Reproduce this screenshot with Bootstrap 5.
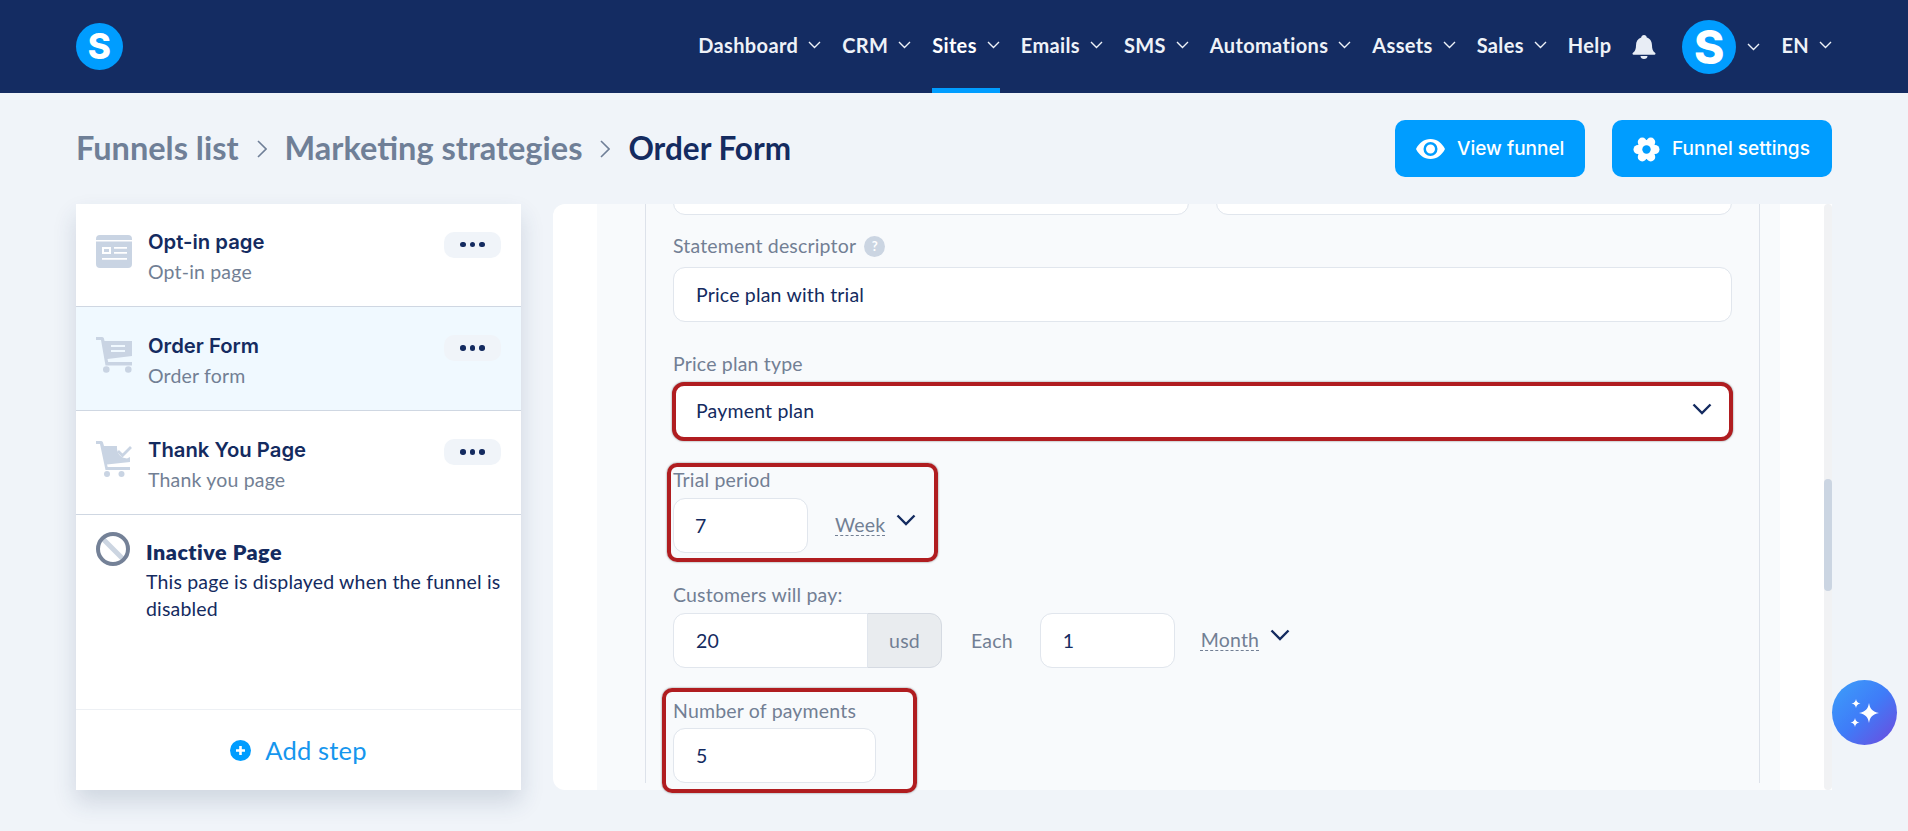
<!DOCTYPE html>
<html lang="en">
<head>
    <meta charset="UTF-8">
    <meta name="viewport" content="width=device-width, initial-scale=1.0">
    <title>Order Form</title>
    <link href="https://cdn.jsdelivr.net/npm/bootstrap@5.3.0/dist/css/bootstrap.min.css" rel="stylesheet">
    <script src="https://cdn.jsdelivr.net/npm/bootstrap@5.3.0/dist/js/bootstrap.bundle.min.js"></script>
    <style>
        body {
            background-color: #f0f4f9;
            color: #142b60;
            font-family: "Lato", "Liberation Sans", sans-serif;
            font-size: 19.5px;
            letter-spacing: .18px;
            height: 831px;
            overflow: hidden;
        }
        .top-bar {
            height: 93px;
            background-color: #142c62;
            padding: 0 76px;
        }
        .brand-dot {
            background-color: #009dff;
            color: #fff;
            font-family: "Inter", sans-serif;
            font-weight: 800;
            width: 47px;
            height: 47px;
            font-size: 35px;
            line-height: 1;
        }
        .brand-dot.big {
            width: 54px;
            height: 54px;
            font-size: 46px;
            margin-left: 26px;
        }
        .top-link {
            height: 93px;
            color: #eef2f8;
            font-weight: 700;
            font-size: 20px;
            letter-spacing: .35px;
            text-decoration: none;
            margin-left: 21px;
            border-bottom: 5px solid transparent;
            padding-top: 1px;
        }
        .top-link svg { margin-left: 10px; }
        .top-link.current { color: #fff; border-bottom-color: #009dff; }
        .bell-ico { margin-left: 21px; }
        .avatar-caret { margin-left: 11px; }
        .page-head {
            height: 111px;
            padding: 0 76px;
        }
        .crumb-part {
            font-size: 32.5px;
            font-weight: 700;
            letter-spacing: 0;
            color: #6f7f97;
            text-decoration: none;
        }
        .crumb-part.here { color: #142b60; font-size: 31.5px; }
        .crumb-sep { margin: 0 18px; }
        .head-btn {
            background-color: #009dff;
            border: 0;
            color: #fff;
            height: 57px;
            border-radius: 10px;
            font-family: "Inter", sans-serif;
            font-size: 19px;
            font-weight: 500;
            letter-spacing: 0;
            display: flex;
            align-items: center;
            gap: 12px;
        }
        .head-btn:hover { background-color: #009dff; color: #fff; }
        .btn-view { width: 190px; padding: 1px 0 0 21px; }
        .btn-settings { width: 220px; padding: 1px 0 0 21px; margin-left: 27px; }
        .work-area {
            padding: 0 76px;
            gap: 32px;
        }
        .steps-col {
            width: 445px;
            height: 586px;
            background-color: #fff;
            box-shadow: 0 12px 22px rgba(40, 60, 100, .16);
        }
        .list-group-flush > .step-row,
        .list-group-flush > .step-row:last-child {
            height: 104px;
            padding: 0 20px;
            border: 0;
            border-bottom: 1px solid #cfd7e2;
            border-radius: 0;
            background-color: #fff;
        }
        .list-group-flush > .step-row:first-child { height: 103px; }
        .list-group-flush > .step-row.active-step { background-color: #f0f9ff; }
        .step-ico { width: 36px; flex-shrink: 0; margin-right: 17px; margin-top: -8px; }
        .step-body { flex: 1; margin-left: -1px; padding-top: 4px; }
        .step-name {
            font-family: "Inter", sans-serif;
            font-size: 20.3px;
            font-weight: 600;
            letter-spacing: 0;
            line-height: 26px;
            color: #142b60;
        }
        .step-sub {
            line-height: 26px;
            margin-top: 4px;
            color: #727f94;
        }
        .dots-btn {
            width: 57px;
            height: 26px;
            background-color: #f0f4f9;
            border-radius: 10px;
            gap: 4px;
            margin-top: -21px;
        }
        .dots-btn span {
            width: 5.500px;
            height: 5.500px;
            border-radius: 50%;
            background-color: #142b60;
        }
        .inactive-row { padding: 17px 20px 0; }
        .no-ico { margin-right: 16px; flex-shrink: 0; }
        .inactive-title { font-size: 21.5px; font-weight: 800; letter-spacing: .5px; line-height: 26px; margin-top: 7px; }
        .inactive-text { line-height: 27px; margin-top: 3px; }
        .add-row {
            height: 81px;
            border-top: 1px solid #edf0f4;
            color: #1596ee;
            font-size: 25.5px;
            text-decoration: none;
            gap: 14px;
        }
        .form-panel {
            flex: 1;
            height: 586px;
            background-color: #fff;
            border-radius: 12px 0 0 12px;
        }
        .panel-light {
            margin-left: 44px;
            width: 1183px;
            padding: 0 21px 0 48px;
            background-color: #f8fafc;
        }
        .form-box {
            border-left: 1px solid #dde2ea;
            border-right: 1px solid #dde2ea;
            padding: 0 27px;
            width: 1115px;
        }
        .cut-row {
            height: 11px;
            overflow: hidden;
            align-items: flex-end;
            gap: 27px;
        }
        .cut-row .form-control { flex: 1; }
        .fld-label {
            display: block;
            line-height: 25px;
            color: #727f94;
            margin-bottom: 6px;
        }
        .form-control, .form-select, .input-group-text {
            height: 55px;
            font-size: 19.5px;
            letter-spacing: .18px;
            color: #142b60;
            border: 1px solid #e1e6ed;
            border-radius: 12px;
            padding-left: 22px;
            box-shadow: none;
        }
        .fld { margin-top: 29px; position: relative; }
        .fld-first { margin-top: 18px; }
        .fld-first .fld-label { margin-bottom: 9px; }
        .fld-trial { margin-top: 26px; }
        .fld-count { margin-top: 30px; }
        .fld-count .fld-label { margin-bottom: 5px; }
        .help-mark {
            display: inline-block;
            width: 21px;
            height: 21px;
            border-radius: 50%;
            background-color: #cbd5e2;
            color: #fff;
            font-size: 13px;
            font-weight: 700;
            line-height: 21px;
            text-align: center;
            margin-left: 8px;
            vertical-align: 2px;
        }
        .form-select.plan-select {
            height: 59px;
            border: 4px solid #b01d20;
            border-radius: 12px;
            box-shadow: 0 0 2px rgba(60, 60, 60, .7);
            padding: 0 0 2px 20px;
            margin-left: -1px;
            width: calc(100% + 2px);
            background-image: none;
        }
        .plan-caret { position: absolute; right: 20px; top: 21px; }
        .input-group-text {
            background-color: #e9ecef;
            color: #727f94;
            width: 75px;
            padding: 0;
            justify-content: center;
            border-color: #d5dae2;
        }
        .num-short { width: 135px; padding-left: 21px; }
        .num-count { width: 203px; }
        .pay-group { width: 269px; }
        .pay-each { width: 135px; }
        .each-word { color: #727f94; margin: 0 27px 0 29px; }
        .dotted-unit {
            color: #727f94;
            margin-left: 27px;
            padding-bottom: 2px;
            text-decoration: underline dashed;
            text-underline-offset: 3px;
            text-decoration-thickness: 1px;
        }
        .pay-each + .dotted-unit { margin-left: 26px; }
        .unit-caret { margin-left: 11px; margin-top: -10px; }
        .red-frame {
            position: absolute;
            border: 4px solid #b01d20;
            border-radius: 10px;
            box-shadow: 0 0 2px rgba(60, 60, 60, .7);
            pointer-events: none;
        }
        .frame-trial { left: -6px; top: -4px; width: 271px; height: 99px; }
        .frame-count { left: -11px; top: -10px; width: 255px; height: 105px; }
        .scroll-track {
            width: 8px;
            height: 586px;
            margin-left: auto;
            background-color: #f1f2f4;
            border-radius: 4px;
        }
        .scroll-thumb {
            height: 112px;
            margin-top: 275px;
            background-color: #cbd5e2;
            border-radius: 4px;
        }
        .spark-btn {
            position: absolute;
            left: 1832px;
            top: 680px;
            width: 65px;
            height: 65px;
            background: linear-gradient(135deg, #3ca0fa 0%, #3f7cf8 50%, #6f49dc 100%);
        }
    </style>
</head>
<body>
    <nav class="top-bar d-flex align-items-center">
        <a href="#" class="brand-dot rounded-circle d-flex align-items-center justify-content-center text-decoration-none">S</a>
        <div class="ms-auto d-flex align-items-center">
            <a href="#" class="top-link d-flex align-items-center">Dashboard<svg width="13" height="8" viewBox="0 0 13 8"><path d="M1 1l5.500 5.500L12 1" fill="none" stroke="#eef2f8" stroke-width="1.400"/></svg></a>
            <a href="#" class="top-link d-flex align-items-center">CRM<svg width="13" height="8" viewBox="0 0 13 8"><path d="M1 1l5.500 5.500L12 1" fill="none" stroke="#eef2f8" stroke-width="1.400"/></svg></a>
            <a href="#" class="top-link current d-flex align-items-center">Sites<svg width="13" height="8" viewBox="0 0 13 8"><path d="M1 1l5.500 5.500L12 1" fill="none" stroke="#eef2f8" stroke-width="1.400"/></svg></a>
            <a href="#" class="top-link d-flex align-items-center">Emails<svg width="13" height="8" viewBox="0 0 13 8"><path d="M1 1l5.500 5.500L12 1" fill="none" stroke="#eef2f8" stroke-width="1.400"/></svg></a>
            <a href="#" class="top-link d-flex align-items-center">SMS<svg width="13" height="8" viewBox="0 0 13 8"><path d="M1 1l5.500 5.500L12 1" fill="none" stroke="#eef2f8" stroke-width="1.400"/></svg></a>
            <a href="#" class="top-link d-flex align-items-center">Automations<svg width="13" height="8" viewBox="0 0 13 8"><path d="M1 1l5.500 5.500L12 1" fill="none" stroke="#eef2f8" stroke-width="1.400"/></svg></a>
            <a href="#" class="top-link d-flex align-items-center">Assets<svg width="13" height="8" viewBox="0 0 13 8"><path d="M1 1l5.500 5.500L12 1" fill="none" stroke="#eef2f8" stroke-width="1.400"/></svg></a>
            <a href="#" class="top-link d-flex align-items-center">Sales<svg width="13" height="8" viewBox="0 0 13 8"><path d="M1 1l5.500 5.500L12 1" fill="none" stroke="#eef2f8" stroke-width="1.400"/></svg></a>
            <a href="#" class="top-link d-flex align-items-center">Help</a>
            <svg class="bell-ico" width="24" height="24" viewBox="0 0 24 24"><path d="M12 0c1.600 0 2.600 1 2.800 2.400C18.400 3.600 20 6.600 20 10.500c0 3.400.8 5.600 3 7.300.9.7.5 1.900-.6 1.900H1.600c-1.100 0-1.500-1.200-.6-1.900 2.200-1.700 3-3.900 3-7.300 0-3.900 1.600-6.900 5.200-8.100C9.400 1 10.400 0 12 0zM8.500 21h7c0 1.800-1.500 3-3.500 3s-3.500-1.200-3.500-3z" fill="#e8edf5"/></svg>
            <a href="#" class="brand-dot big rounded-circle d-flex align-items-center justify-content-center text-decoration-none">S</a>
            <svg class="avatar-caret" width="13" height="8" viewBox="0 0 13 8"><path d="M1 1l5.500 5.500L12 1" fill="none" stroke="#eef2f8" stroke-width="1.400"/></svg>
            <a href="#" class="top-link d-flex align-items-center">EN<svg width="13" height="8" viewBox="0 0 13 8"><path d="M1 1l5.500 5.500L12 1" fill="none" stroke="#eef2f8" stroke-width="1.400"/></svg></a>
        </div>
    </nav>

    <div class="page-head d-flex align-items-center">
        <a href="#" class="crumb-part">Funnels list</a>
        <svg class="crumb-sep" width="10" height="18" viewBox="0 0 10 18"><path d="M1 1l8 8-8 8" fill="none" stroke="#6f7f97" stroke-width="1.600"/></svg>
        <a href="#" class="crumb-part">Marketing strategies</a>
        <svg class="crumb-sep" width="10" height="18" viewBox="0 0 10 18"><path d="M1 1l8 8-8 8" fill="none" stroke="#6f7f97" stroke-width="1.600"/></svg>
        <span class="crumb-part here">Order Form</span>
        <button class="btn head-btn btn-view ms-auto">
            <svg width="29" height="20" viewBox="0 0 29 20"><path fill-rule="evenodd" d="M14.500 0C21 0 26 4 29 10c-3 6-8 10-14.500 10S3 16 0 10C3 4 8 0 14.500 0zm0 3a7 7 0 1 0 0 14 7 7 0 0 0 0-14zm0 2.500a4.500 4.500 0 1 1 0 9 4.500 4.500 0 0 1 0-9z" fill="#fff"/></svg>
            View funnel
        </button>
        <button class="btn head-btn btn-settings">
            <svg width="27" height="27" viewBox="0 0 27 27"><g fill="#fff"><circle cx="13.500" cy="13.500" r="9.500"/><circle cx="22" cy="13.500" r="4.500"/><circle cx="5" cy="13.500" r="4.500"/><circle cx="17.750" cy="6.100" r="4.500"/><circle cx="9.250" cy="6.100" r="4.500"/><circle cx="17.750" cy="20.900" r="4.500"/><circle cx="9.250" cy="20.900" r="4.500"/></g><circle cx="13.500" cy="13.500" r="4.200" fill="#009dff"/></svg>
            Funnel settings
        </button>
    </div>

    <div class="work-area d-flex align-items-start">
        <aside class="steps-col d-flex flex-column">
            <div class="list-group list-group-flush">
                <div class="list-group-item step-row d-flex align-items-center">
                    <svg class="step-ico" height="33" viewBox="0 0 36 33"><path fill-rule="evenodd" d="M4 0h28a4 4 0 0 1 4 4v25a4 4 0 0 1-4 4H4a4 4 0 0 1-4-4V4a4 4 0 0 1 4-4zM0 5v1.500h36V5zm6 7v7h9v-7zm2 2h5v3H8zm10-2v1.800h13V12zm0 5v1.800h13V17zM6 23v1.800h25V23z" fill="#c9d4e3"/></svg>
                    <div class="step-body">
                        <div class="step-name">Opt-in page</div>
                        <div class="step-sub">Opt-in page</div>
                    </div>
                    <div class="dots-btn d-flex align-items-center justify-content-center"><span></span><span></span><span></span></div>
                </div>
                <div class="list-group-item step-row active-step d-flex align-items-center">
                    <svg class="step-ico" height="36" viewBox="0 0 36 36"><path fill-rule="evenodd" d="M0 0h6a2 2 0 0 1 2 1.500L8.500 4H36v15L11.500 22l.7 3H36v3.500H9.500L5 3H0zM15 8v2h14V8zm0 5v2h14v-2zM7 32.500a3.300 3.300 0 1 1 6.600 0 3.300 3.300 0 0 1-6.600 0zm22 0a3.300 3.300 0 1 1 6.600 0 3.300 3.300 0 0 1-6.600 0z" fill="#c9d4e3"/></svg>
                    <div class="step-body">
                        <div class="step-name">Order Form</div>
                        <div class="step-sub">Order form</div>
                    </div>
                    <div class="dots-btn d-flex align-items-center justify-content-center"><span></span><span></span><span></span></div>
                </div>
                <div class="list-group-item step-row d-flex align-items-center">
                    <svg class="step-ico" height="36" viewBox="0 0 36 36"><path d="M0 0h5a2 2 0 0 1 2 1.500L8 5h13c-.5 7 3 12 10 12.500l3-1.500v5L11 23.500l.7 2.500H34v3H9.500L4 3H0z" fill="#c9d4e3"/><path d="M22 10l4.500 4.500L35 6" fill="none" stroke="#c9d4e3" stroke-width="2.800"/><circle cx="11" cy="33" r="3" fill="#c9d4e3"/><circle cx="25.500" cy="33" r="3" fill="#c9d4e3"/></svg>
                    <div class="step-body">
                        <div class="step-name">Thank You Page</div>
                        <div class="step-sub">Thank you page</div>
                    </div>
                    <div class="dots-btn d-flex align-items-center justify-content-center"><span></span><span></span><span></span></div>
                </div>
            </div>
            <div class="inactive-row d-flex flex-grow-1">
                <svg class="no-ico" width="34" height="34" viewBox="0 0 34 34"><line x1="7" y1="7" x2="27" y2="27" stroke="#ccd5e1" stroke-width="5"/><circle cx="17" cy="17" r="15" fill="none" stroke="#748197" stroke-width="4"/></svg>
                <div>
                    <div class="inactive-title">Inactive Page</div>
                    <div class="inactive-text">This page is displayed when the funnel is disabled</div>
                </div>
            </div>
            <a href="#" class="add-row d-flex align-items-center justify-content-center">
                <svg width="21" height="21" viewBox="0 0 21 21"><circle cx="10.500" cy="10.500" r="10.500" fill="#009dff"/><path d="M10.500 6v9M6 10.500h9" stroke="#fff" stroke-width="2.600"/></svg>
                Add step
            </a>
        </aside>

        <main class="form-panel d-flex">
            <div class="panel-light">
                <div class="form-box">
                    <div class="cut-row d-flex">
                        <input class="form-control" type="text" value="">
                        <input class="form-control" type="text" value="">
                    </div>
                    <div class="fld fld-first">
                        <label class="fld-label">Statement descriptor<span class="help-mark">?</span></label>
                        <input class="form-control" type="text" value="Price plan with trial">
                    </div>
                    <div class="fld">
                        <label class="fld-label">Price plan type</label>
                        <div class="position-relative">
                            <select class="form-select plan-select"><option>Payment plan</option></select>
                            <svg class="plan-caret" width="20" height="12" viewBox="0 0 20 12"><path d="M1.500 1.500L10 10l8.500-8.500" fill="none" stroke="#142b60" stroke-width="2.400"/></svg>
                        </div>
                    </div>
                    <div class="fld fld-trial">
                        <div class="red-frame frame-trial"></div>
                        <label class="fld-label">Trial period</label>
                        <div class="d-flex align-items-center">
                            <input class="form-control num-short" type="text" value="7">
                            <span class="dotted-unit">Week</span>
                            <svg class="unit-caret" width="20" height="13" viewBox="0 0 20 13"><path d="M1.500 1.500L10 10l8.500-8.500" fill="none" stroke="#142b60" stroke-width="2.400"/></svg>
                        </div>
                    </div>
                    <div class="fld">
                        <label class="fld-label">Customers will pay:</label>
                        <div class="d-flex align-items-center">
                            <div class="input-group pay-group flex-nowrap">
                                <input class="form-control" type="text" value="20">
                                <span class="input-group-text">usd</span>
                            </div>
                            <span class="each-word">Each</span>
                            <input class="form-control pay-each" type="text" value="1">
                            <span class="dotted-unit">Month</span>
                            <svg class="unit-caret" width="20" height="13" viewBox="0 0 20 13"><path d="M1.500 1.500L10 10l8.500-8.500" fill="none" stroke="#142b60" stroke-width="2.400"/></svg>
                        </div>
                    </div>
                    <div class="fld fld-count">
                        <div class="red-frame frame-count"></div>
                        <label class="fld-label">Number of payments</label>
                        <input class="form-control num-count" type="text" value="5">
                    </div>
                </div>
            </div>
            <div class="scroll-track"><div class="scroll-thumb"></div></div>
        </main>
    </div>

    <button class="btn spark-btn rounded-circle d-flex align-items-center justify-content-center p-0 border-0">
        <svg width="34" height="34" viewBox="0 0 34 34"><path d="M21 7c1 6 3.500 8.500 10 10-6.500 1.500-9 4-10 10-1-6-3.500-8.500-10-10 6.500-1.500 9-4 10-10zM8 3c.5 2.800 1.500 3.800 4.500 4.500C9.500 8.200 8.500 9.200 8 12c-.5-2.800-1.500-3.800-4.500-4.500C6.500 6.800 7.500 5.800 8 3zM7 22c.5 2.800 1.500 3.800 4.500 4.500-3 .7-4 1.700-4.500 4.500-.5-2.800-1.500-3.800-4.500-4.500C5.500 25.800 6.500 24.800 7 22z" fill="#fff"/></svg>
    </button>
</body>
</html>
